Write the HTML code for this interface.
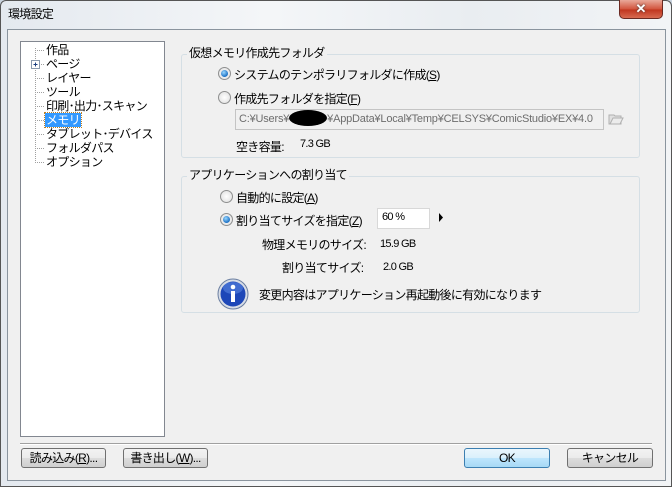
<!DOCTYPE html>
<html><head><meta charset="utf-8"><style>
*{margin:0;padding:0;box-sizing:border-box}
body{width:672px;height:487px;overflow:hidden;background:#c9d3de;font-family:"Liberation Sans","Noto Sans CJK JP",sans-serif;font-size:12px;color:#000;position:relative;letter-spacing:-0.7px}
.frame{position:absolute;left:0;top:0;width:672px;height:487px;border:1px solid #555;border-radius:6px 6px 0 0;background:linear-gradient(90deg,#e4e9ef,#f4f6f8 40%,#e9edf1 70%,#f2f4f6)}
.title{position:absolute;left:8px;top:5px;font-size:12px;color:#000}
.close{position:absolute;left:619px;top:0;width:44px;height:19px;border:1px solid #6b2a22;border-top:none;border-radius:0 0 5px 5px;background:linear-gradient(#e9a99a,#d2553e 50%,#c0361f 55%,#d86a50);color:#fff;font-weight:bold;text-align:center;font-size:13px;line-height:17px;text-shadow:0 0 2px #333;letter-spacing:0}
.client{position:absolute;left:7px;top:29px;width:659px;height:452px;background:#f0f0f0;border:1px solid #8a949e}
.abs{position:absolute}
.tree{left:20px;top:41px;width:145px;height:396px;background:#fff;border:1px solid #828790}
.tree div{position:absolute;left:25px;white-space:nowrap;line-height:14px}
.group{border:1px solid #d5dfe5;border-radius:3px;background:#f0f0f0}
.glabel{background:#f0f0f0;padding:0 2px;line-height:14px}
.radio{width:13px;height:13px;border-radius:50%;border:1px solid #8e8f8f;background:radial-gradient(#fff,#dcdcdc)}
.radio.on::after{content:"";position:absolute;left:2px;top:2px;width:7px;height:7px;border-radius:50%;background:radial-gradient(circle at 40% 35%,#9ad8ff,#1a6fc4 70%)}
.btn{border:1px solid #707070;border-radius:3px;background:linear-gradient(#f2f2f2,#ebebeb 50%,#dddddd 50%,#cfcfcf);text-align:center;line-height:18px;font-size:12px}
.ok{border-color:#3c7fb1;background:linear-gradient(#eaf6fd,#d9f0fc 50%,#bee6fd 50%,#a7d9f5)}
</style></head><body>
<div class="frame"></div>
<div class="title">環境設定</div>
<div class="close">✕</div>
<div class="client"></div>

<div class="abs tree">
<svg class="abs" style="left:0;top:0" width="40" height="130"><g stroke="#a0a0a0" stroke-dasharray="1 1" fill="none"><line x1="14.5" y1="6" x2="14.5" y2="120"/><line x1="14" y1="8.5" x2="24" y2="8.5"/><line x1="18" y1="22.5" x2="24" y2="22.5"/><line x1="14" y1="36.5" x2="24" y2="36.5"/><line x1="14" y1="50.5" x2="24" y2="50.5"/><line x1="14" y1="64.5" x2="24" y2="64.5"/><line x1="14" y1="78.5" x2="24" y2="78.5"/><line x1="14" y1="92.5" x2="24" y2="92.5"/><line x1="14" y1="106.5" x2="24" y2="106.5"/><line x1="14" y1="120.5" x2="24" y2="120.5"/></g>
<rect x="10.5" y="18.5" width="8" height="8" fill="#fff" stroke="#8a9aae"/><path d="M12.5 22.5h4M14.5 20.5v4" stroke="#1c3f80"/></svg>
<div style="top:1px">作品</div>
<div style="top:15px">ページ</div>
<div style="top:29px">レイヤー</div>
<div style="top:43px">ツール</div>
<div style="top:57px">印刷･出力･スキャン</div>
<div style="top:71px;left:24px;background:#3399ff;color:#fff;outline:1px dotted #c08020;padding:0 1px">メモリ</div>
<div style="top:85px">タブレット･デバイス</div>
<div style="top:99px">フォルダパス</div>
<div style="top:113px">オプション</div>
</div>

<div class="abs group" style="left:181px;top:54px;width:459px;height:104px"></div>
<div class="abs glabel" style="left:187px;top:46px">仮想メモリ作成先フォルダ</div>
<div class="abs radio on" style="left:218px;top:67px"></div>
<div class="abs" style="left:234px;top:66px">システムのテンポラリフォルダに作成(<u>S</u>)</div>
<div class="abs radio" style="left:218px;top:91px"></div>
<div class="abs" style="left:234px;top:90px">作成先フォルダを指定(<u>F</u>)</div>
<div class="abs" style="left:235px;top:109px;width:369px;height:21px;border:1px solid #c4c4c4;background:#f0f0f0;color:#6d6d6d;font-size:11px;line-height:18px;padding-left:3px;white-space:nowrap;letter-spacing:-0.2px">C:¥Users¥<span style="display:inline-block;width:38px;height:16px;background:#000;border-radius:50%;vertical-align:-4px"></span>¥AppData¥Local¥Temp¥CELSYS¥ComicStudio¥EX¥4.0</div>
<svg class="abs" style="left:608px;top:112px" width="16" height="14"><path d="M1 3h5l1 1h6v8H1z" fill="#e0e0e0" stroke="#b0b0b0"/><path d="M2 12l3-6h10l-3 6z" fill="#ececec" stroke="#b0b0b0"/></svg>
<div class="abs" style="left:236px;top:138px">空き容量:</div>
<div class="abs" style="left:300px;top:138px;font-size:11px">7.3 GB</div>

<div class="abs group" style="left:181px;top:176px;width:459px;height:137px"></div>
<div class="abs glabel" style="left:187px;top:168px">アプリケーションへの割り当て</div>
<div class="abs radio" style="left:220px;top:190px"></div>
<div class="abs" style="left:236px;top:189px">自動的に設定(<u>A</u>)</div>
<div class="abs radio on" style="left:220px;top:213px"></div>
<div class="abs" style="left:236px;top:212px">割り当てサイズを指定(<u>Z</u>)</div>
<div class="abs" style="left:377px;top:208px;width:53px;height:21px;background:#fff;border:1px solid #d8d8d8;font-size:11px;line-height:16px;padding-left:4px">60 %</div>
<svg class="abs" style="left:438px;top:213px" width="6" height="9"><path d="M1 0l4 4.5L1 9z" fill="#000"/></svg>
<div class="abs" style="left:262px;top:236px">物理メモリのサイズ:</div>
<div class="abs" style="left:380px;top:238px;font-size:11px">15.9 GB</div>
<div class="abs" style="left:282px;top:259px">割り当てサイズ:</div>
<div class="abs" style="left:383px;top:261px;font-size:11px">2.0 GB</div>
<svg class="abs" style="left:217px;top:278px" width="32" height="32"><circle cx="16" cy="16" r="15" fill="#d8dde6" stroke="#6a7ea0"/><circle cx="16" cy="16" r="12.5" fill="#1d47b8"/><ellipse cx="16" cy="10" rx="10" ry="6" fill="#5a86e0" opacity=".6"/><circle cx="16" cy="9" r="2.3" fill="#fff"/><rect x="14" y="13" width="4" height="11" fill="#fff"/></svg>
<div class="abs" style="left:259px;top:286px">変更内容はアプリケーション再起動後に有効になります</div>

<div class="abs" style="left:20px;top:443px;width:632px;height:2px;border-top:1px solid #a0a0a0;border-bottom:1px solid #fff"></div>
<div class="abs btn" style="left:21px;top:448px;width:85px;height:20px">読み込み(<u>R</u>)...</div>
<div class="abs btn" style="left:123px;top:448px;width:85px;height:20px">書き出し(<u>W</u>)...</div>
<div class="abs btn ok" style="left:464px;top:448px;width:86px;height:20px">OK</div>
<div class="abs btn" style="left:567px;top:448px;width:86px;height:20px">キャンセル</div>
</body></html>
